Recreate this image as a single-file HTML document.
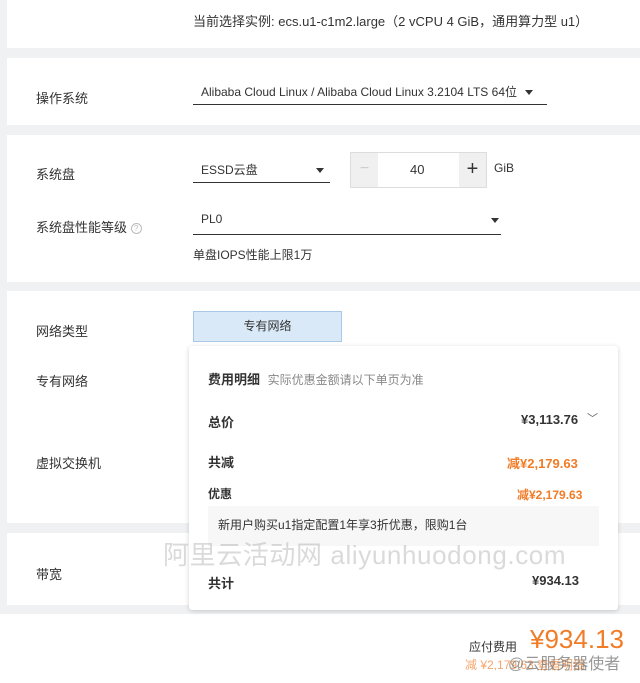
<!DOCTYPE html>
<html><head><meta charset="utf-8"><style>
*{margin:0;padding:0;box-sizing:border-box}
body{width:640px;height:683px;background:#f0f1f2;font-family:"Liberation Sans","Noto Sans CJK SC",sans-serif;color:#333;position:relative;overflow:hidden;font-size:13px}
.card{position:absolute;left:7px;right:0;background:#fff}
.a{position:absolute;white-space:nowrap}
.lbl{font-size:13px;color:#333}
.tri{position:absolute;width:0;height:0;border-left:4px solid transparent;border-right:4px solid transparent;border-top:5px solid #333}
</style></head><body>
<div class="card" style="top:0;height:48px"></div>
<div class="a" style="left:193px;top:11px;font-size:13px;color:#333">当前选择实例: ecs.u1-c1m2.large（2 vCPU 4 GiB，通用算力型 u1）</div>

<div class="card" style="top:58px;height:67px"></div>
<div class="a lbl" style="left:36px;top:88px">操作系统</div>
<div class="a" style="left:201px;top:83px;font-size:12px">Alibaba Cloud Linux / Alibaba Cloud Linux 3.2104 LTS 64位</div>
<div class="tri" style="left:525px;top:90px"></div>
<div class="a" style="left:193px;top:104px;width:354px;border-top:1px solid #333"></div>

<div class="card" style="top:135px;height:147px"></div>
<div class="a lbl" style="left:36px;top:164px">系统盘</div>
<div class="a" style="left:201px;top:161px;font-size:12px">ESSD云盘</div>
<div class="tri" style="left:316px;top:168px"></div>
<div class="a" style="left:193px;top:182px;width:137px;border-top:1px solid #333"></div>
<div class="a" style="left:350px;top:152px;width:137px;height:36px;border:1px solid #ddd;background:#fff"></div>
<div class="a" style="left:351px;top:153px;width:27px;height:34px;background:#f0f0f0;color:#ccc;text-align:center;line-height:32px;font-size:16px">−</div>
<div class="a" style="left:459px;top:153px;width:27px;height:34px;background:#f0f0f0;color:#333;text-align:center;line-height:32px;font-size:20px">+</div>
<div class="a" style="left:410px;top:162px;font-size:13px">40</div>
<div class="a" style="left:494px;top:161px;font-size:12px">GiB</div>
<div class="a lbl" style="left:36px;top:217px">系统盘性能等级 <span style="display:inline-block;width:11px;height:11px;border:1px solid #bbb;border-radius:50%;font-size:8px;color:#bbb;text-align:center;line-height:9px;vertical-align:1px">?</span></div>
<div class="a" style="left:201px;top:212px;font-size:12px">PL0</div>
<div class="tri" style="left:491px;top:218px"></div>
<div class="a" style="left:193px;top:234px;width:308px;border-top:1px solid #333"></div>
<div class="a" style="left:193px;top:246px;font-size:12px">单盘IOPS性能上限1万</div>

<div class="card" style="top:291px;height:232px"></div>
<div class="a lbl" style="left:36px;top:321px">网络类型</div>
<div class="a" style="left:193px;top:311px;width:149px;height:31px;background:#d9e9f7;border:1px solid #a8c8e6;text-align:center;line-height:29px;font-size:12px">专有网络</div>
<div class="a lbl" style="left:36px;top:371px">专有网络</div>
<div class="a lbl" style="left:36px;top:453px">虚拟交换机</div>

<div class="card" style="top:533px;height:72px"></div>
<div class="a lbl" style="left:36px;top:564px">带宽</div>
<div style="position:absolute;left:0;right:0;top:614px;bottom:0;background:#fff"></div>

<div class="a" style="left:189px;top:346px;width:429px;height:264px;background:#fff;border-radius:3px;box-shadow:0 1px 5px rgba(0,0,0,.18)"></div>
<div class="a" style="left:208px;top:369px;font-size:13px;font-weight:bold;color:#333">费用明细 <span style="font-weight:normal;font-size:12px;color:#888;margin-left:4px">实际优惠金额请以下单页为准</span></div>
<div class="a" style="left:208px;top:412px;font-weight:bold">总价</div>
<div class="a" style="left:521px;top:412px;font-weight:bold">¥3,113.76</div>
<div class="a" style="left:587px;top:410px;color:#666;font-size:11px">﹀</div>
<div class="a" style="left:208px;top:452px;font-weight:bold">共减</div>
<div class="a" style="left:507px;top:453px;font-weight:bold;color:#f27b26">减¥2,179.63</div>
<div class="a" style="left:208px;top:485px;font-weight:bold;font-size:12px">优惠</div>
<div class="a" style="left:517px;top:486px;font-weight:bold;color:#f27b26;font-size:12px">减¥2,179.63</div>
<div class="a" style="left:208px;top:506px;width:391px;height:40px;background:#f7f7f7"></div>
<div class="a" style="left:218px;top:516px;font-size:12px">新用户购买u1指定配置1年享3折优惠，限购1台</div>
<div class="a" style="left:208px;top:573px;font-weight:bold">共计</div>
<div class="a" style="left:532px;top:573px;font-weight:bold">¥934.13</div>
<div class="a" style="left:163px;top:535px;font-size:26px;letter-spacing:0.6px;color:rgba(150,150,150,.35)">阿里云活动网 aliyunhuodong.com</div>

<div class="a" style="left:469px;top:638px;font-size:12px">应付费用</div>
<div class="a" style="left:530px;top:624px;font-size:26px;color:#f27b26">¥934.13</div>
<div class="a" style="left:465px;top:656px;font-size:12px;color:#f5a56c">减 ¥2,179.63 查看明细</div>
<div class="a" style="left:508px;top:650px;font-size:16px;color:rgba(110,110,110,.7)">@云服务器使者</div>
</body></html>
